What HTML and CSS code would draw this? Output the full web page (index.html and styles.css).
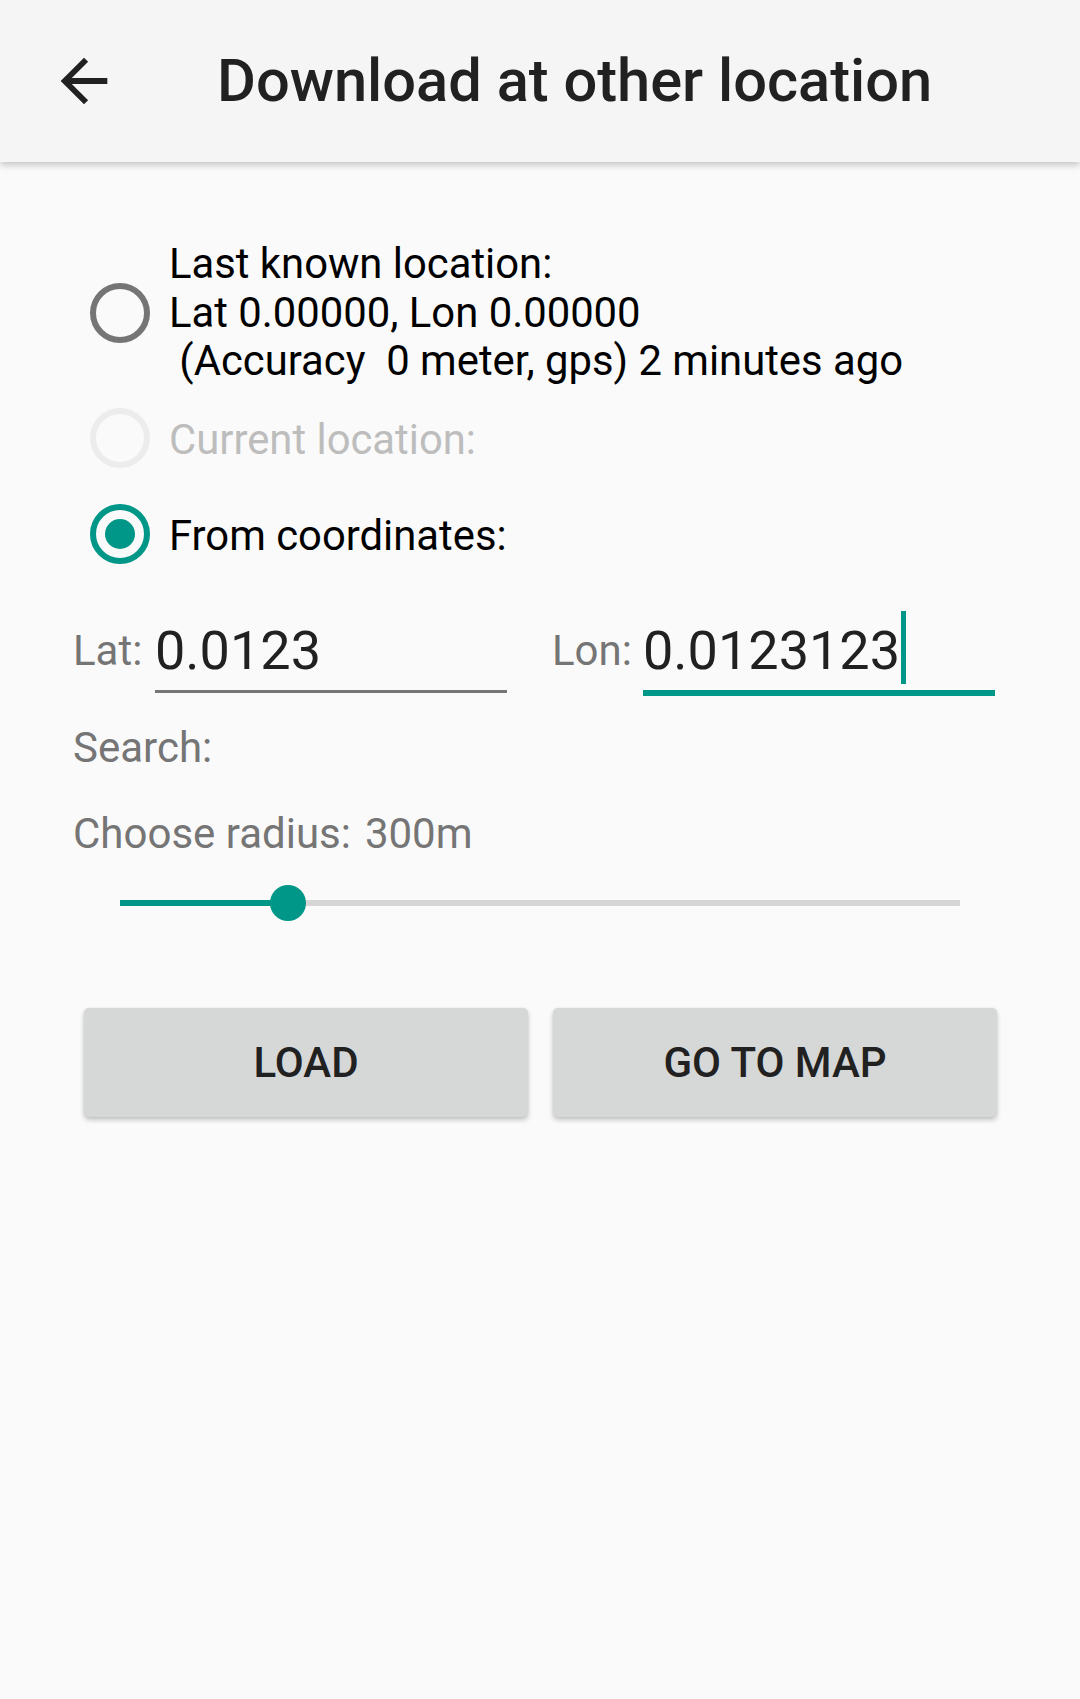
FILE: index.html
```html
<!DOCTYPE html>
<html lang="en">
<head>
<meta charset="utf-8">
<title>Download at other location</title>
<link rel="stylesheet" href="styles.css">
</head>
<body>
<header class="appbar">
  <svg class="back" viewBox="0 0 24 24" aria-hidden="true"><path d="M20 11H7.83l5.59-5.59L12 4l-8 8 8 8 1.41-1.41L7.83 13H20v-2z"/></svg>
  <h1 class="title">Download at other location</h1>
</header>
<main class="content">
  <div class="radios">
    <div class="radio-row first">
      <span class="radio"></span>
      <div class="radio-text">Last known location:<br>Lat 0.00000, Lon 0.00000<br>&nbsp;(Accuracy&nbsp; 0 meter, gps) 2 minutes ago</div>
    </div>
    <div class="radio-row second">
      <span class="radio disabled"></span>
      <div class="radio-text single disabled">Current location:</div>
    </div>
    <div class="radio-row third">
      <span class="radio checked"><span class="dot"></span></span>
      <div class="radio-text single">From coordinates:</div>
    </div>
  </div>

  <div class="coords">
    <div class="coord lat">
      <span class="coord-label">Lat:</span>
      <div class="field">
        <div class="field-value">0.0123</div>
        <div class="field-line"></div>
      </div>
    </div>
    <div class="coord lon">
      <span class="coord-label">Lon:</span>
      <div class="field focused">
        <div class="field-value"><span class="value-text">0.0123123<span class="cursor"></span></span></div>
        <div class="field-line"></div>
      </div>
    </div>
  </div>

  <div class="label search">Search:</div>
  <div class="label radius">Choose radius:<span class="radius-value">300m</span></div>

  <div class="slider">
    <div class="track">
      <div class="track-fill" style="width:168px"></div>
      <div class="track-rest"></div>
    </div>
    <span class="thumb" style="left:150px"></span>
  </div>

  <div class="buttons">
    <button class="btn">LOAD</button>
    <button class="btn">GO TO MAP</button>
  </div>
</main>
</body>
</html>
```
FILE: styles.css
```css
* { box-sizing: border-box; }
html, body {
  margin: 0;
  padding: 0;
}
body {
  width: 1080px;
  min-height: 1699px;
  background: #fafafa;
  font-family: Roboto, "Noto Sans", sans-serif;
  color: #000;
}
.appbar {
  height: 162px;
  background: #f5f5f5;
  display: flex;
  align-items: center;
  box-shadow: 0 3px 7px rgba(0, 0, 0, 0.22);
  position: relative;
  z-index: 1;
}
.back {
  width: 70px;
  height: 70px;
  margin-left: 49px;
  fill: #212121;
  flex: none;
}
.title {
  margin: 0 0 0 98px;
  font-size: 59.6px;
  font-weight: 500;
  color: #212121;
  line-height: normal;
}
.content {
  padding: 0 0 0 73px;
}
.radios {
  padding: 78px 0 0 17px;
}
.radio-row {
  display: flex;
  align-items: center;
}
.radio-row.second { margin-top: 22px; }
.radio-row.third { margin-top: 36px; }
.radio {
  width: 60px;
  height: 60px;
  border-radius: 50%;
  border: 6px solid #757575;
  flex: none;
  display: flex;
  align-items: center;
  justify-content: center;
}
.radio.disabled { border-color: #ececec; }
.radio.checked { border-color: #009688; }
.dot {
  width: 30px;
  height: 30px;
  border-radius: 50%;
  background: #009688;
}
.radio-text {
  margin-left: 19px;
  font-size: 41.8px;
  line-height: 48.5px;
  color: #000;
}
.radio-text.single { padding-top: 5px; }
.radio-text.disabled { color: #bdbdbd; }
.coords {
  display: flex;
  margin-top: 55px;
}
.coord {
  display: flex;
  align-items: flex-start;
}
.coord.lat { width: 434px; }
.coord.lon { width: 443px; margin-left: 45px; }
.coord-label {
  font-size: 42px;
  line-height: 49px;
  margin-top: 7px;
  color: #757575;
}
.field {
  width: 352px;
  margin-left: auto;
}
.field-value {
  font-size: 54px;
  line-height: 63px;
  height: 71px;
  color: #212121;
  padding-bottom: 8px;
  white-space: nowrap;
}
.value-text {
  position: relative;
}
.field-line {
  height: 3px;
  background: #757575;
}
.field.focused .field-line {
  height: 6px;
  background: #009688;
}
.cursor {
  position: absolute;
  left: 100%;
  top: -8px;
  width: 5px;
  height: 73px;
  margin-left: 1px;
  background: #009688;
}
.label {
  font-size: 42px;
  line-height: 48.5px;
  color: #757575;
}
.search { margin-top: 28px; }
.radius { margin-top: 38px; }
.radius-value { margin-left: 14px; }
.slider {
  position: relative;
  width: 840px;
  height: 36px;
  margin: 26px 0 0 47px;
  display: flex;
  align-items: center;
}
.track {
  display: flex;
  width: 100%;
  height: 6px;
}
.track-fill { background: #009688; height: 100%; }
.track-rest { background: #d6d6d6; height: 100%; flex: 1; }
.thumb {
  position: absolute;
  top: 0;
  width: 36px;
  height: 36px;
  border-radius: 50%;
  background: #009688;
}
.buttons {
  display: grid;
  grid-template-columns: 444px 444px;
  column-gap: 25px;
  margin: 87px 0 0 11px;
}
.btn {
  height: 109px;
  border: none;
  border-radius: 5px;
  background: #d6d7d7;
  box-shadow: 0 3px 5px rgba(0, 0, 0, 0.22), 0 0 2px rgba(0, 0, 0, 0.08);
  font-family: Roboto, "Noto Sans", sans-serif;
  font-size: 42px;
  font-weight: 500;
  color: #212121;
  display: flex;
  align-items: center;
  justify-content: center;
  padding: 0;
}
```
